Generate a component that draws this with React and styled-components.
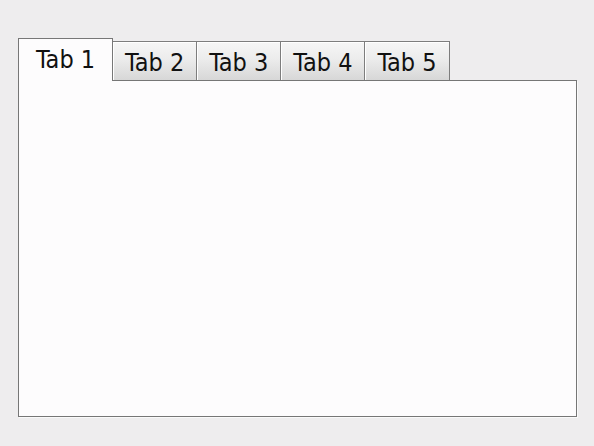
import React, { useState } from 'react';
import styled, { createGlobalStyle } from 'styled-components';

// Page reset + grey window background
const GlobalStyle = createGlobalStyle`
  html, body {
    margin: 0;
    padding: 0;
    background: #eeedee;
  }
  body {
    font-family: 'DejaVu Sans Condensed', 'DejaVu Sans', sans-serif;
  }
`;

const Page = styled.div`
  width: 594px;
  height: 446px;
  box-sizing: border-box;
  padding: 38px 0 0 18px;
`;

const TabWidget = styled.div`
  display: flex;
  flex-direction: column;
  width: 559px;
`;

const TabBar = styled.div`
  display: flex;
  align-items: flex-end;
  height: 42px;
`;

// height = 1 border + 7 top + 27 line + bottom padding
const Tab = styled.button`
  position: relative;
  display: block;
  font-family: inherit;
  font-size: 25px;
  line-height: 27px;
  color: #111;
  margin: 0 0 0 -1px;
  border: 1px solid #7d7d7d;
  border-bottom: none;
  box-sizing: border-box;
  cursor: pointer;
  padding: 7px 12px 4px;
  height: 39px;
  white-space: nowrap;
  background: linear-gradient(#f6f6f6, #ececec 45%, #d7d7d7);
  box-shadow: inset 1px 1px 0 #ffffff;

  &:first-child {
    margin-left: 0;
  }

  ${p => p.$active && `
    z-index: 1;
    height: 43px;
    margin-bottom: -1px;
    padding: 7px 17px 8px;
    background: #fdfcfd;
    box-shadow: none;
    border-color: #777;
  `}
`;

const Panel = styled.div`
  height: 337px;
  box-sizing: border-box;
  border: 1px solid #767676;
  background: #fdfcfd;
  box-shadow: 1px 1px 0 #fafafa;
`;

const tabs = ['Tab 1', 'Tab 2', 'Tab 3', 'Tab 4', 'Tab 5'];

const App = () => {
  const [active, setActive] = useState(0);
  return (
    <>
      <GlobalStyle />
      <Page>
        <TabWidget>
          <TabBar>
            {tabs.map((t, i) => (
              <Tab key={t} $active={i === active} onClick={() => setActive(i)}>
                {t}
              </Tab>
            ))}
          </TabBar>
          <Panel />
        </TabWidget>
      </Page>
    </>
  );
};

export default App;
